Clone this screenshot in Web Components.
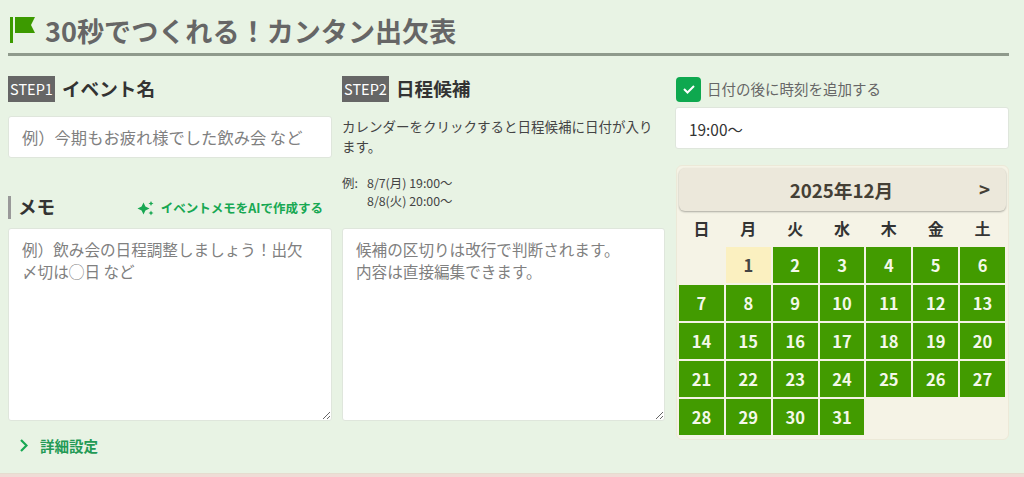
<!DOCTYPE html>
<html lang="ja">
<head>
<meta charset="utf-8">
<title>30秒でつくれる！カンタン出欠表</title>
<style>
  html, body { margin: 0; height: 477px; overflow: hidden; }
  body {
    background: #e8f3e4;
    font-family: "Noto Sans CJK JP", "Noto Sans", sans-serif;
    color: #333;
    display: flex;
    flex-direction: column;
  }
</style>
</head>
<body>
<c-event-form>
  <c-page-title slot="title">30秒でつくれる！カンタン出欠表</c-page-title>

  <c-step-heading slot="col1" step="STEP1">イベント名</c-step-heading>
  <c-text-box slot="col1" class="muted">例）今期もお疲れ様でした飲み会 など</c-text-box>
  <c-memo-heading slot="col1">メモ</c-memo-heading>
  <c-text-area slot="col1" text="例）飲み会の日程調整しましょう！出欠&#10;〆切は◯日 など"></c-text-area>
  <c-details-link slot="col1">詳細設定</c-details-link>

  <c-step-heading slot="col2" step="STEP2">日程候補</c-step-heading>
  <c-date-help slot="col2"></c-date-help>
  <c-text-area slot="col2" text="候補の区切りは改行で判断されます。&#10;内容は直接編集できます。"></c-text-area>

  <c-time-toggle slot="col3">日付の後に時刻を追加する</c-time-toggle>
  <c-text-box slot="col3">19:00～</c-text-box>
  <c-calendar slot="col3" title-text="2025年12月"></c-calendar>
</c-event-form>

<script>
class CEventForm extends HTMLElement {
    constructor() {
        super();
        this._root = this.attachShadow({ mode: 'open' });
        this._root.innerHTML = `
            <style>
            :host { display: flex; flex-direction: column; height: 477px; box-sizing: border-box; }
            .main { flex: 1; padding: 0 15px 0 8px; min-height: 0; }
            .cols { display: grid; grid-template-columns: 324px 323px 334px; column-gap: 10px; }
            .col { display: flex; flex-direction: column; }
            .strip { height: 4px; background: #efdcd6; border-top: 1px solid #e6dccf; box-sizing: border-box; }
            </style>
            <div class="main">
                <slot name="title"></slot>
                <div class="cols">
                    <div class="col"><slot name="col1"></slot></div>
                    <div class="col"><slot name="col2"></slot></div>
                    <div class="col"><slot name="col3"></slot></div>
                </div>
            </div>
            <div class="strip"></div>
        `;
    }
}

class CPageTitle extends HTMLElement {
    constructor() {
        super();
        this._root = this.attachShadow({ mode: 'open' });
        this._root.innerHTML = `
            <style>
            :host {
              display: flex;
              align-items: center;
              gap: 10px;
              height: 56px;
              box-sizing: border-box;
              padding: 7px 0 0 2px;
              border-bottom: 3px solid #8f9a8c;
              margin-bottom: 20px;
              font-size: 27.1px;
              font-weight: 700;
              color: #666;
            }
            svg { flex: none; width: 25px; height: 26px; }
            </style>
            <svg viewBox="0 0 25 26">
                <rect x="0" y="0" width="3" height="26" fill="#3c9a00"/>
                <path d="M5 0H25L21 8L25 16H5Z" fill="#3c9a00"/>
            </svg>
            <span><slot></slot></span>
        `;
    }
}

class CStepHeading extends HTMLElement {
    constructor() {
        super();
        this._root = this.attachShadow({ mode: 'open' });
        this._root.innerHTML = `
            <style>
            :host {
              display: flex;
              align-items: center;
              gap: 7px;
              height: 26px;
              margin: 0 0 14px 0;
              font-size: 18.6px;
              font-weight: 700;
              color: #333;
            }
            .badge {
              background: #666;
              color: #fff;
              font-size: 14.5px;
              font-weight: 400;
              height: 26px;
              line-height: 26px;
              width: 47px;
              text-align: center;
              white-space: nowrap;
            }
            .name { padding-bottom: 4px; }
            </style>
            <span class="badge"></span>
            <span class="name"><slot></slot></span>
        `;
        this._root.querySelector('.badge').textContent = this.getAttribute('step');
    }
}

class CTextBox extends HTMLElement {
    constructor() {
        super();
        this._root = this.attachShadow({ mode: 'open' });
        this._root.innerHTML = `
            <style>
            :host {
              display: flex;
              align-items: center;
              height: 42px;
              box-sizing: border-box;
              padding: 1px 13px 0;
              background: #fff;
              border: 1px solid #dfe6dc;
              border-radius: 3px;
              font-size: 15.4px;
              color: #333;
            }
            :host(.muted) { color: #808080; font-size: 16.3px; padding-top: 0; }
            </style>
            <slot></slot>
        `;
    }
}

class CMemoHeading extends HTMLElement {
    constructor() {
        super();
        this._root = this.attachShadow({ mode: 'open' });
        this._root.innerHTML = `
            <style>
            :host {
              display: flex;
              align-items: center;
              justify-content: space-between;
              height: 23px;
              margin: 38px 9px 9px 0;
            }
            h3 {
              margin: 0;
              border-left: 3px solid #999;
              padding: 0 0 4px 7px;
              font-size: 18.6px;
              line-height: 19px;
              font-weight: 700;
              color: #333;
            }
            a {
              display: flex;
              align-items: center;
              gap: 7px;
              font-size: 12.5px;
              font-weight: 700;
              color: #17a852;
            }
            svg { width: 17px; height: 16px; }
            </style>
            <h3><slot></slot></h3>
            <a>
                <svg viewBox="0 0 17 16" fill="#17a852">
                    <path d="M6.5 2.5l1.9 4.1 4.1 1.9-4.1 1.9-1.9 4.1-1.9-4.1-4.1-1.9 4.1-1.9z"/>
                    <path d="M14 1l.8 1.7 1.7.8-1.7.8-.8 1.7-.8-1.7-1.7-.8 1.7-.8z"/>
                    <path d="M14 10.5l.8 1.7 1.7.8-1.7.8-.8 1.7-.8-1.7-1.7-.8 1.7-.8z"/>
                </svg>
                <span>イベントメモをAIで作成する</span>
            </a>
        `;
    }
}

class CTextArea extends HTMLElement {
    constructor() {
        super();
        this._root = this.attachShadow({ mode: 'open' });
        this._root.innerHTML = `
            <style>
            :host { display: block; height: 193px; }
            textarea {
              display: block;
              width: 100%;
              height: 100%;
              box-sizing: border-box;
              margin: 0;
              padding: 9px 13px;
              background: #fff;
              border: 1px solid #dfe6dc;
              border-radius: 3px;
              outline: none;
              font-family: inherit;
              font-size: 15.6px;
              line-height: 22px;
              color: #808080;
            }
            </style>
            <textarea></textarea>
        `;
        this._root.querySelector('textarea').textContent = this.getAttribute('text');
    }
}

class CDetailsLink extends HTMLElement {
    constructor() {
        super();
        this._root = this.attachShadow({ mode: 'open' });
        this._root.innerHTML = `
            <style>
            :host {
              display: flex;
              align-items: center;
              gap: 12px;
              margin: 14px 0 0 12px;
              height: 20px;
              font-size: 14.5px;
              font-weight: 700;
              color: #239a55;
            }
            svg { width: 8px; height: 13px; }
            </style>
            <svg viewBox="0 0 8 13" fill="none" stroke="#17a852" stroke-width="2.2">
                <path d="M1 1l5.5 5.5L1 12"/>
            </svg>
            <span><slot></slot></span>
        `;
    }
}

class CDateHelp extends HTMLElement {
    constructor() {
        super();
        this._root = this.attachShadow({ mode: 'open' });
        this._root.innerHTML = `
            <style>
            :host {
              display: block;
              height: 111px;
              padding-top: 1px;
              color: #444;
            }
            p { margin: 0 0 18px; font-size: 13.5px; line-height: 19.5px; width: 316px; }
            .example { display: flex; font-size: 12.4px; line-height: 18px; }
            .example span { width: 25px; }
            </style>
            <p>カレンダーをクリックすると日程候補に日付が入ります。</p>
            <div class="example">
                <span>例:</span>
                <div>8/7(月) 19:00～<br>8/8(火) 20:00～</div>
            </div>
        `;
    }
}

class CTimeToggle extends HTMLElement {
    constructor() {
        super();
        this._root = this.attachShadow({ mode: 'open' });
        this._root.innerHTML = `
            <style>
            :host {
              display: flex;
              align-items: center;
              gap: 6px;
              height: 26px;
              margin: 0 0 5px 1px;
              font-size: 14.5px;
              color: #666;
            }
            .box {
              width: 25px;
              height: 25px;
              border-radius: 4px;
              background: #0ea84f;
              display: flex;
              align-items: center;
              justify-content: center;
            }
            .label { padding-bottom: 2px; }
            svg { width: 14px; height: 12px; }
            </style>
            <span class="box">
                <svg viewBox="0 0 14 12" fill="none" stroke="#fff" stroke-width="2">
                    <path d="M2 6l3.5 3.5L12 3"/>
                </svg>
            </span>
            <span class="label"><slot></slot></span>
        `;
    }
}

class CCalendar extends HTMLElement {
    constructor() {
        super();
        this._root = this.attachShadow({ mode: 'open' });
        this._root.innerHTML = `
            <style>
            :host {
              display: block;
              box-sizing: border-box;
              width: 333px;
              height: 275px;
              margin: 16px 0 0 1px;
              padding: 2px 3px 0 2px;
              background: #f5f3e6;
              border: 1px solid #ece9d8;
              border-radius: 6px;
            }
            header {
              display: flex;
              align-items: center;
              justify-content: center;
              position: relative;
              height: 43px;
              width: 327px;
              box-sizing: border-box;
              padding-right: 2px;
              background: #ece8db;
              border-radius: 6px;
              box-shadow: 0 1px 2px rgba(0,0,0,.3);
              font-size: 18.7px;
              font-weight: 700;
              color: #443f35;
            }
            .next { position: absolute; right: 16px; top: 7px; font-size: 18.7px; font-weight: 700; }
            .grid { display: grid; grid-template-columns: repeat(7, 44.86px); gap: 2px; }
            .wd { height: 34px; display: flex; align-items: center; justify-content: center; font-size: 16px; font-weight: 700; color: #333; }
            .day { height: 36px; display: flex; align-items: center; justify-content: center; font-size: 16.5px; font-weight: 700; color: #f4f8ea; background: #429b00; }
            .day.today { background: #fbf0c0; color: #444; }
            .blank { height: 36px; }
            </style>
            <header><span id="month"></span><span class="next">&gt;</span></header>
            <div class="grid" id="grid"></div>
        `;
        this._root.querySelector('#month').textContent = this.getAttribute('title-text');
        this.injectDays();
    }

    injectDays() {
        let grid = this._root.querySelector('#grid');
        let weekdays = ["日", "月", "火", "水", "木", "金", "土"];
        for (let i = 0; i < weekdays.length; i++) {
            let wd = document.createElement("div");
            wd.className = "wd";
            wd.textContent = weekdays[i];
            grid.appendChild(wd);
        }
        let blank = document.createElement("div");
        blank.className = "blank";
        grid.appendChild(blank);
        for (let d = 1; d <= 31; d++) {
            let day = document.createElement("div");
            day.className = (d == 1) ? "day today" : "day";
            day.textContent = d;
            grid.appendChild(day);
        }
    }
}

window.customElements.define('c-event-form', CEventForm);
window.customElements.define('c-page-title', CPageTitle);
window.customElements.define('c-step-heading', CStepHeading);
window.customElements.define('c-text-box', CTextBox);
window.customElements.define('c-memo-heading', CMemoHeading);
window.customElements.define('c-text-area', CTextArea);
window.customElements.define('c-details-link', CDetailsLink);
window.customElements.define('c-date-help', CDateHelp);
window.customElements.define('c-time-toggle', CTimeToggle);
window.customElements.define('c-calendar', CCalendar);
</script>
</body>
</html>
